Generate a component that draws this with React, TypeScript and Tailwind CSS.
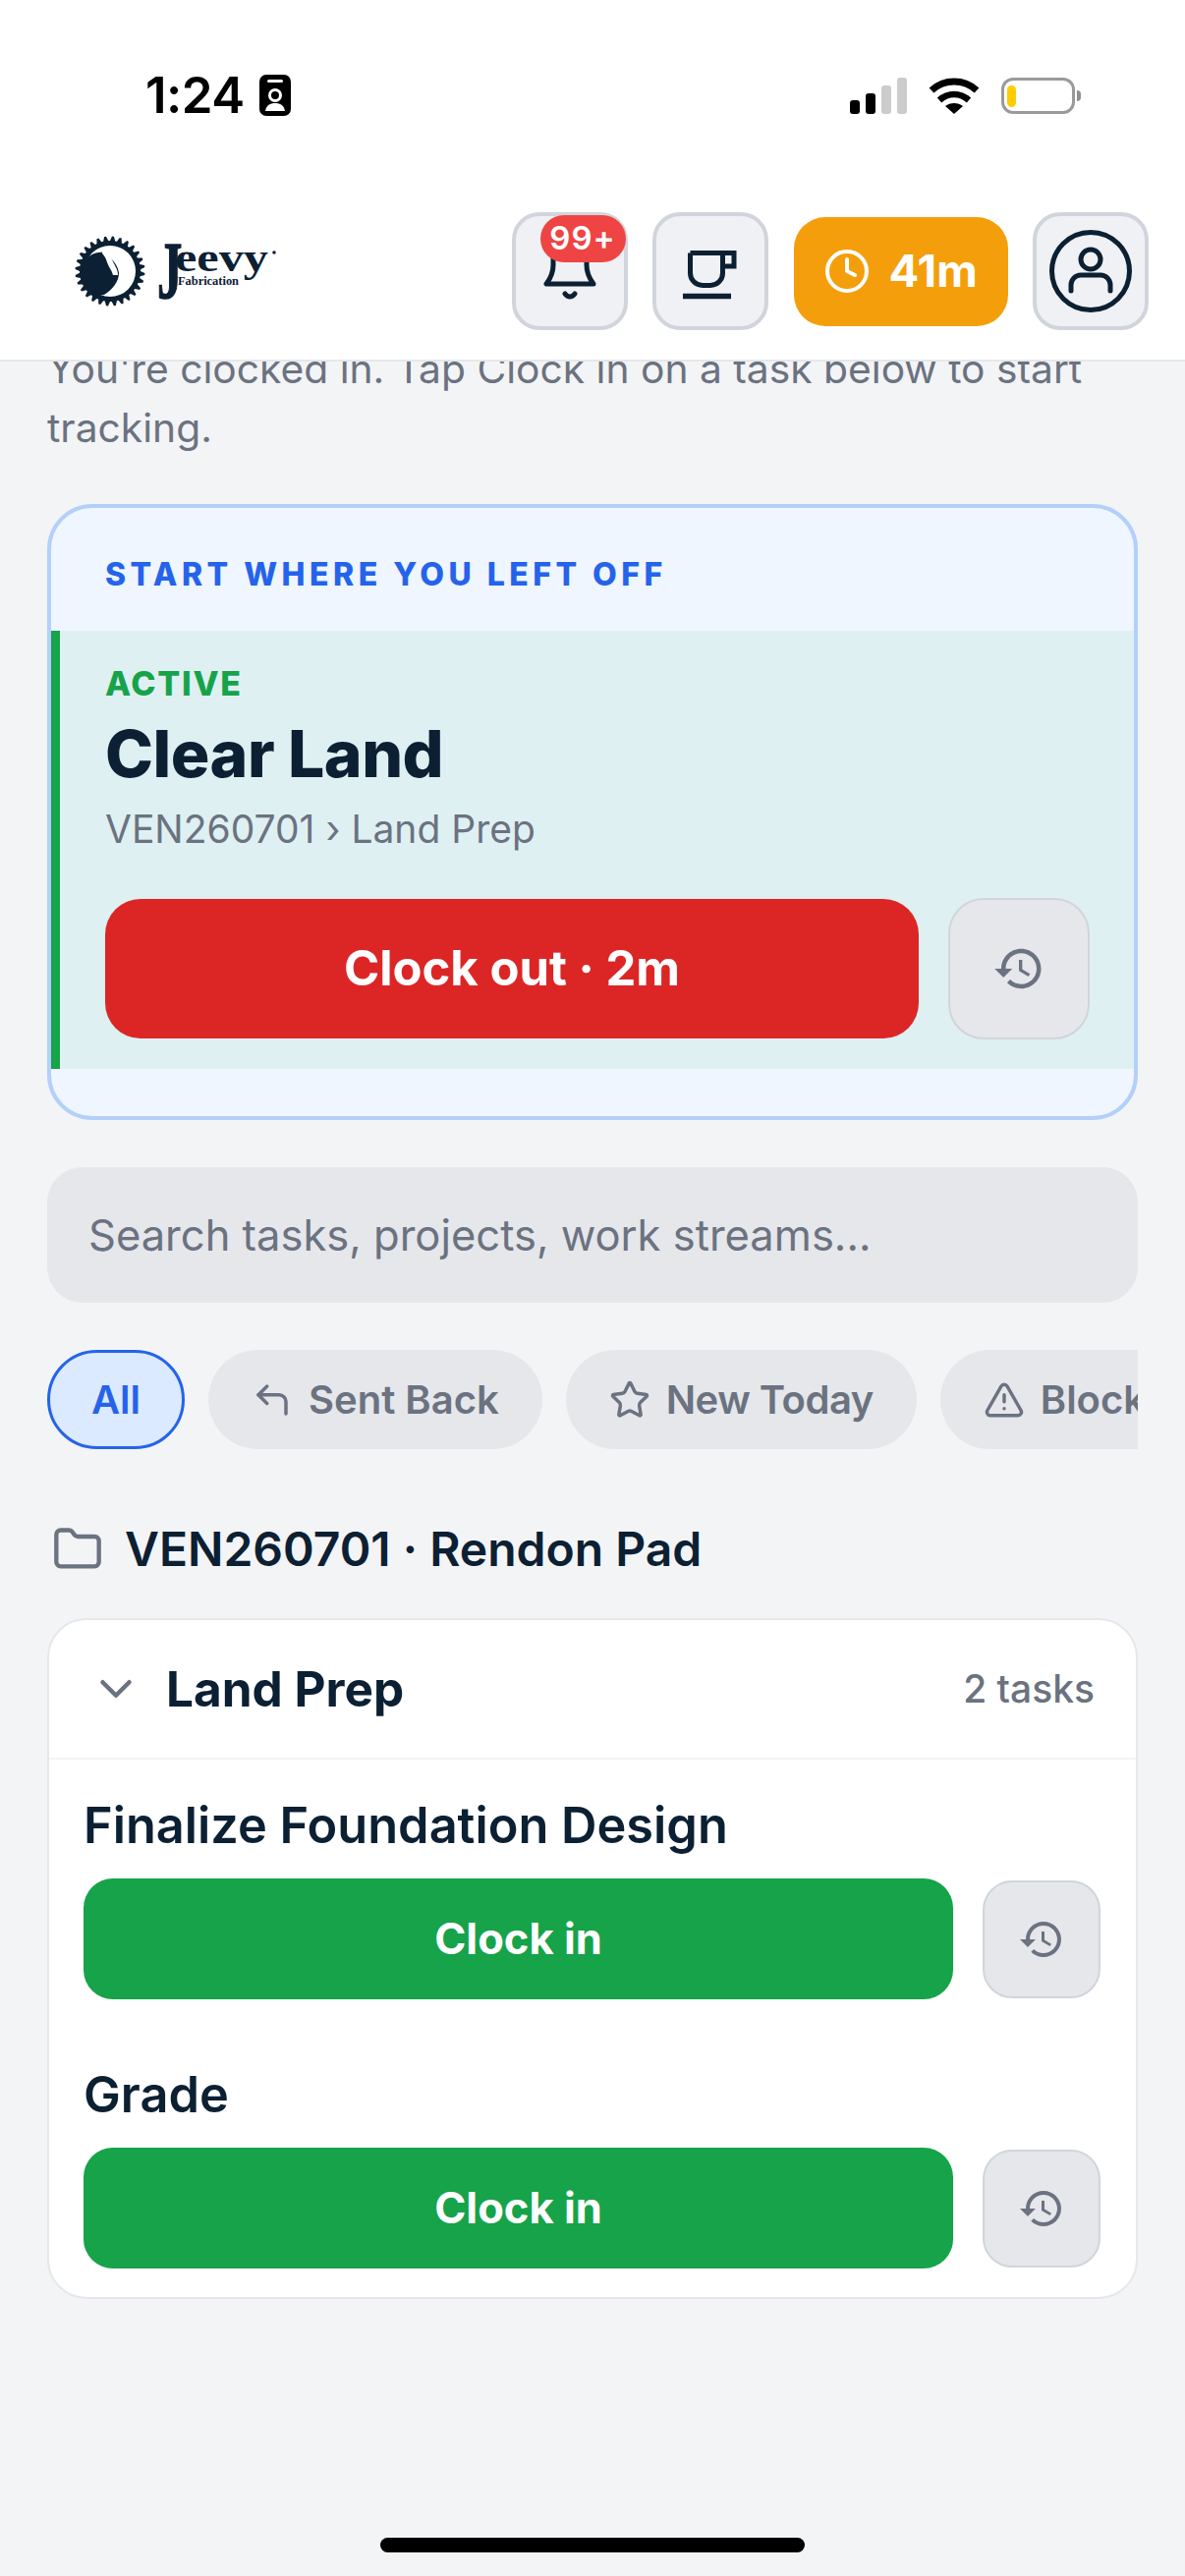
import { ChevronDown, Clock, CornerUpLeft, Folder, Star, TriangleAlert } from "lucide-react";

const HIST =
  "M13 3c-4.97 0-9 4.03-9 9H1l3.89 3.89.07.14L9 12H6c0-3.87 3.13-7 7-7s7 3.13 7 7-3.13 7-7 7c-1.93 0-3.68-.79-4.94-2.06l-1.42 1.42C8.27 19.99 10.51 21 13 21c4.97 0 9-4.03 9-9s-4.03-9-9-9zm-1 5v5l4.28 2.54.72-1.21-3.5-2.08V8H12z";

function HistoryIcon({ size }: { size: number }) {
  return (
    <svg width={size} height={size} viewBox="0 0 24 24" fill="#6b7280">
      <path d={HIST} />
    </svg>
  );
}

function HistoryButton({ className, size }: { className: string; size: number }) {
  return (
    <button className={`flex shrink-0 items-center justify-center border-[2px] border-[#d1d5db] bg-[#e5e7eb] ${className}`}>
      <HistoryIcon size={size} />
    </button>
  );
}

function Logo() {
  const pts: string[] = [];
  const n = 28;
  for (let i = 0; i < n; i++) {
    const a0 = (i / n) * Math.PI * 2;
    const step = (Math.PI * 2) / n;
    [
      [31, a0],
      [35.5, a0 + step * 0.25],
      [35.5, a0 + step * 0.5],
      [31, a0 + step * 0.75],
    ].forEach(([r, a]) => pts.push(`${(36 + r * Math.cos(a)).toFixed(1)},${(36 + r * Math.sin(a)).toFixed(1)}`));
  }
  return (
    <svg width="206" height="72" viewBox="0 0 206 72" fill="#0c2033">
      <polygon points={pts.join(" ")} />
      <circle cx="36" cy="36" r="26" fill="#fff" />
      <path d="M8 28C14 19 22 16 29 17C38 22 44 30 45 38C45 47 38 55 30 60C20 62 12 55 8 46Z" />
      <path d="M29 13C34 14 37 18 38 24C40 30 44 33 44 40L39 40C38 35 34 31 33 27C32 23 30 20 28 18Z" fill="#fff" />
      <text transform="translate(84 63) scale(0.62 1)" fontFamily="'Liberation Serif', serif" fontWeight="700" fontSize="82" stroke="#0c2033" strokeWidth="1.5">J</text>
      <text x="102" y="36" fontFamily="'Liberation Serif', serif" fontWeight="700" fontSize="40" textLength="95" lengthAdjust="spacingAndGlyphs">eevy</text>
      <text x="105" y="50" fontFamily="'Liberation Serif', serif" fontWeight="700" fontSize="12" textLength="62" lengthAdjust="spacingAndGlyphs">Fabrication</text>
      <circle cx="203" cy="17" r="1.8" />
    </svg>
  );
}

function StatusBar() {
  return (
    <div className="flex h-[190px] items-start justify-between pt-[76px] pr-[106px] pl-[148px]">
      <div className="flex items-center gap-[15px]">
        <span className="text-[51px] leading-[42px] font-semibold tracking-[-0.5px] text-black">1:24</span>
        <svg width="32" height="42" viewBox="0 0 32 42">
          <rect width="32" height="42" rx="7" fill="#000" />
          <rect x="8" y="5" width="16" height="3" rx="1.5" fill="#fff" />
          <circle cx="16" cy="21" r="5.5" fill="none" stroke="#fff" strokeWidth="3" />
          <path d="M6 37C7 31 11 29 16 29C21 29 25 31 26 37Z" fill="#fff" />
        </svg>
      </div>
      <div className="flex items-end gap-[22px] pt-[3px]">
        <div className="flex h-[37px] items-end gap-[6px]">
          <div className="h-[14px] w-[10px] rounded-[3px] bg-black" />
          <div className="h-[21px] w-[10px] rounded-[3px] bg-black" />
          <div className="h-[29px] w-[10px] rounded-[3px] bg-[#cccccc]" />
          <div className="h-[37px] w-[10px] rounded-[3px] bg-[#cccccc]" />
        </div>
        <svg width="52" height="37" viewBox="0 0 52 37" fill="none" stroke="#000">
          <path d="M3 13C16 1 36 1 49 13" strokeWidth="7" />
          <path d="M11 23C20 15 32 15 41 23" strokeWidth="6.5" />
          <path d="M17 29C22 25 30 25 35 29L26 37Z" fill="#000" stroke="none" />
        </svg>
        <div className="flex items-center gap-[2px]">
          <div className="flex h-[37px] w-[75px] items-center rounded-[12px] border-[3px] border-[#9a9a9a] pl-[3px]">
            <div className="h-[22px] w-[9px] rounded-[5px] bg-[#ffcc00]" />
          </div>
          <div className="h-[11px] w-[4px] rounded-r-[4px] bg-[#8f8f8f]" />
        </div>
      </div>
    </div>
  );
}

function SquareButton({ children }: { children: React.ReactNode }) {
  return (
    <button className="relative flex h-[120px] w-[118px] shrink-0 items-center justify-center rounded-[28px] border-[4px] border-[#d1d5db] bg-[#f0f1f4]">
      {children}
    </button>
  );
}

function Header() {
  return (
    <header className="flex h-[178px] items-start justify-between border-b-[2px] border-[#e5e7eb] pt-[26px] pr-[37px] pl-[76px]">
      <div className="pt-[24px]">
        <Logo />
      </div>
      <div className="flex items-center gap-[25.5px]">
        <SquareButton>
          <svg width="80" height="70" viewBox="0 0 80 70" fill="none" stroke="#0c2033" strokeWidth="5" strokeLinecap="round" strokeLinejoin="round">
            <path d="M16 48H64C61 44 57 37 57 29V22C57 4 23 4 23 22V29C23 37 19 44 16 48Z" />
            <path d="M35 58C38 62 42 62 45 58" />
          </svg>
          <span className="absolute top-[-1px] left-[25px] flex h-[48px] w-[87px] items-center justify-center rounded-[24px] bg-[#ef4444] text-[33px] font-semibold tracking-[1px] text-white">
            99+
          </span>
        </SquareButton>
        <SquareButton>
          <svg width="70" height="60" viewBox="0 0 70 60" fill="none" stroke="#0c2033" strokeWidth="5" className="mt-[4px]">
            <path d="M14.5 9.5H59V23H47.5M47.5 9.5V30A12.5 12.5 0 0 1 35 42.5H27A12.5 12.5 0 0 1 14.5 30V9.5" />
            <path d="M7 53.5H56" strokeWidth="5.5" />
          </svg>
        </SquareButton>
        <div className="flex h-[111px] w-[218px] items-center gap-[19px] rounded-[32px] bg-[#f59e0b] pl-[30px]">
          <Clock size={48} strokeWidth={2} color="#fff" />
          <span className="text-[45.5px] font-bold text-white">41m</span>
        </div>
        <SquareButton>
          <svg width="92" height="92" viewBox="0 0 92 92" fill="none" stroke="#0c2033" strokeWidth="5" strokeLinecap="round">
            <circle cx="46" cy="46" r="39.5" />
            <circle cx="46" cy="34" r="10" />
            <path d="M26 66V60A10 10 0 0 1 36 50H56A10 10 0 0 1 66 60V66" />
          </svg>
        </SquareButton>
      </div>
    </header>
  );
}

function Chip({ icon, label, active, tight }: { icon?: React.ReactNode; label: string; active?: boolean; tight?: boolean }) {
  return (
    <div
      className={`flex h-[101px] shrink-0 items-center justify-center gap-[16px] rounded-[51px] text-[40px] font-semibold ${
        active ? "w-[140px] border-[3px] border-[#2563eb] bg-[#dbeafe] text-[#2563eb]" : "bg-[#e5e7eb] px-[44px] text-[#6b7280]"
      } ${tight ? "tracking-[-0.5px]" : ""}`}
    >
      {icon}
      <span>{label}</span>
    </div>
  );
}

function TaskRow({ title, className }: { title: string; className?: string }) {
  return (
    <div className={className}>
      <div className="text-[50.5px] leading-[60px] font-semibold text-[#0c2033]">{title}</div>
      <div className="mt-[24px] flex items-center gap-[30px]">
        <button className="h-[123px] flex-1 rounded-[30px] bg-[#16a34a] text-[43.5px] font-bold text-white">Clock in</button>
        <HistoryButton className="h-[120px] w-[120px] rounded-[30px]" size={48} />
      </div>
    </div>
  );
}

export default function App() {
  return (
    <div className="relative flex h-[2622px] w-[1206px] flex-col overflow-hidden bg-[#f3f4f6] font-['Inter',sans-serif]">
      <div className="relative z-10 bg-white">
        <StatusBar />
        <Header />
      </div>
      <main className="px-[48px]">
        <p className="mt-[-22px] mb-[47px] text-[40.75px] leading-[60px] text-[#6b7280]">
          You're clocked in. Tap Clock in on a task below to start tracking.
        </p>

        <section className="overflow-hidden rounded-[46px] border-[4px] border-[#b3d0fb] bg-[#eff6ff]">
          <div className="flex h-[125px] items-center pt-[11px] pl-[55px] text-[32px] font-extrabold tracking-[0.14em] text-[#2563eb]">
            START WHERE YOU LEFT OFF
          </div>
          <div className="border-l-[9px] border-[#16a34a] bg-[#dff0f3] pt-[33px] pr-[45px] pb-[30px] pl-[46px]">
            <div className="text-[34px] leading-[42px] font-extrabold tracking-[0.05em] text-[#16a34a]">ACTIVE</div>
            <div className="mt-[14px] text-[66px] leading-[72px] font-extrabold tracking-[-0.5px] text-[#0c2033]">Clear Land</div>
            <div className="mt-[13px] text-[39px] leading-[56px] text-[#6b7280]">VEN260701 › Land Prep</div>
            <div className="mt-[42px] flex items-center gap-[30px]">
              <button className="h-[142px] flex-1 rounded-[36px] bg-[#dc2626] text-[49px] font-bold text-white">Clock out · 2m</button>
              <HistoryButton className="h-[144px] w-[144px] rounded-[36px]" size={54} />
            </div>
          </div>
          <div className="h-[48px]" />
        </section>

        <input
          readOnly
          placeholder="Search tasks, projects, work streams..."
          className="mt-[48px] block h-[138px] w-full rounded-[36px] bg-[#e5e7eb] px-[42px] text-[43.5px] outline-none placeholder:text-[#6b7280]"
        />

        <div className="mt-[48px] flex gap-[24px] overflow-hidden">
          <Chip label="All" active />
          <Chip label="Sent Back" icon={<CornerUpLeft size={42} strokeWidth={2} />} />
          <Chip label="New Today" tight icon={<Star size={42} strokeWidth={2} />} />
          <Chip label="Blocked" icon={<TriangleAlert size={42} strokeWidth={2} />} />
        </div>

        <div className="mt-[72px] flex h-[60px] items-center gap-[22px] pl-[5px]">
          <Folder size={52} strokeWidth={2} color="#6b7280" />
          <span className="text-[48px] font-semibold text-[#0c2033]">VEN260701 · Rendon Pad</span>
        </div>

        <section className="mt-[40px] rounded-[40px] border-[2px] border-[#e5e7eb] bg-white">
          <div className="flex h-[142px] items-center justify-between border-b-[2px] border-[#f3f4f6] pr-[42px] pl-[41px]">
            <div className="flex items-center gap-[24px]">
              <ChevronDown size={54} strokeWidth={2} color="#6b7280" />
              <span className="text-[49.5px] font-bold text-[#0c2033]">Land Prep</span>
            </div>
            <span className="text-[39px] font-medium text-[#6b7280]">2 tasks</span>
          </div>
          <div className="pt-[37px] pr-[36px] pb-[29px] pl-[35px]">
            <TaskRow title="Finalize Foundation Design" />
            <TaskRow title="Grade" className="mt-[67px]" />
          </div>
        </section>
      </main>
      <div className="absolute top-[2583px] left-[387px] h-[15px] w-[432px] rounded-[8px] bg-black" />
    </div>
  );
}
